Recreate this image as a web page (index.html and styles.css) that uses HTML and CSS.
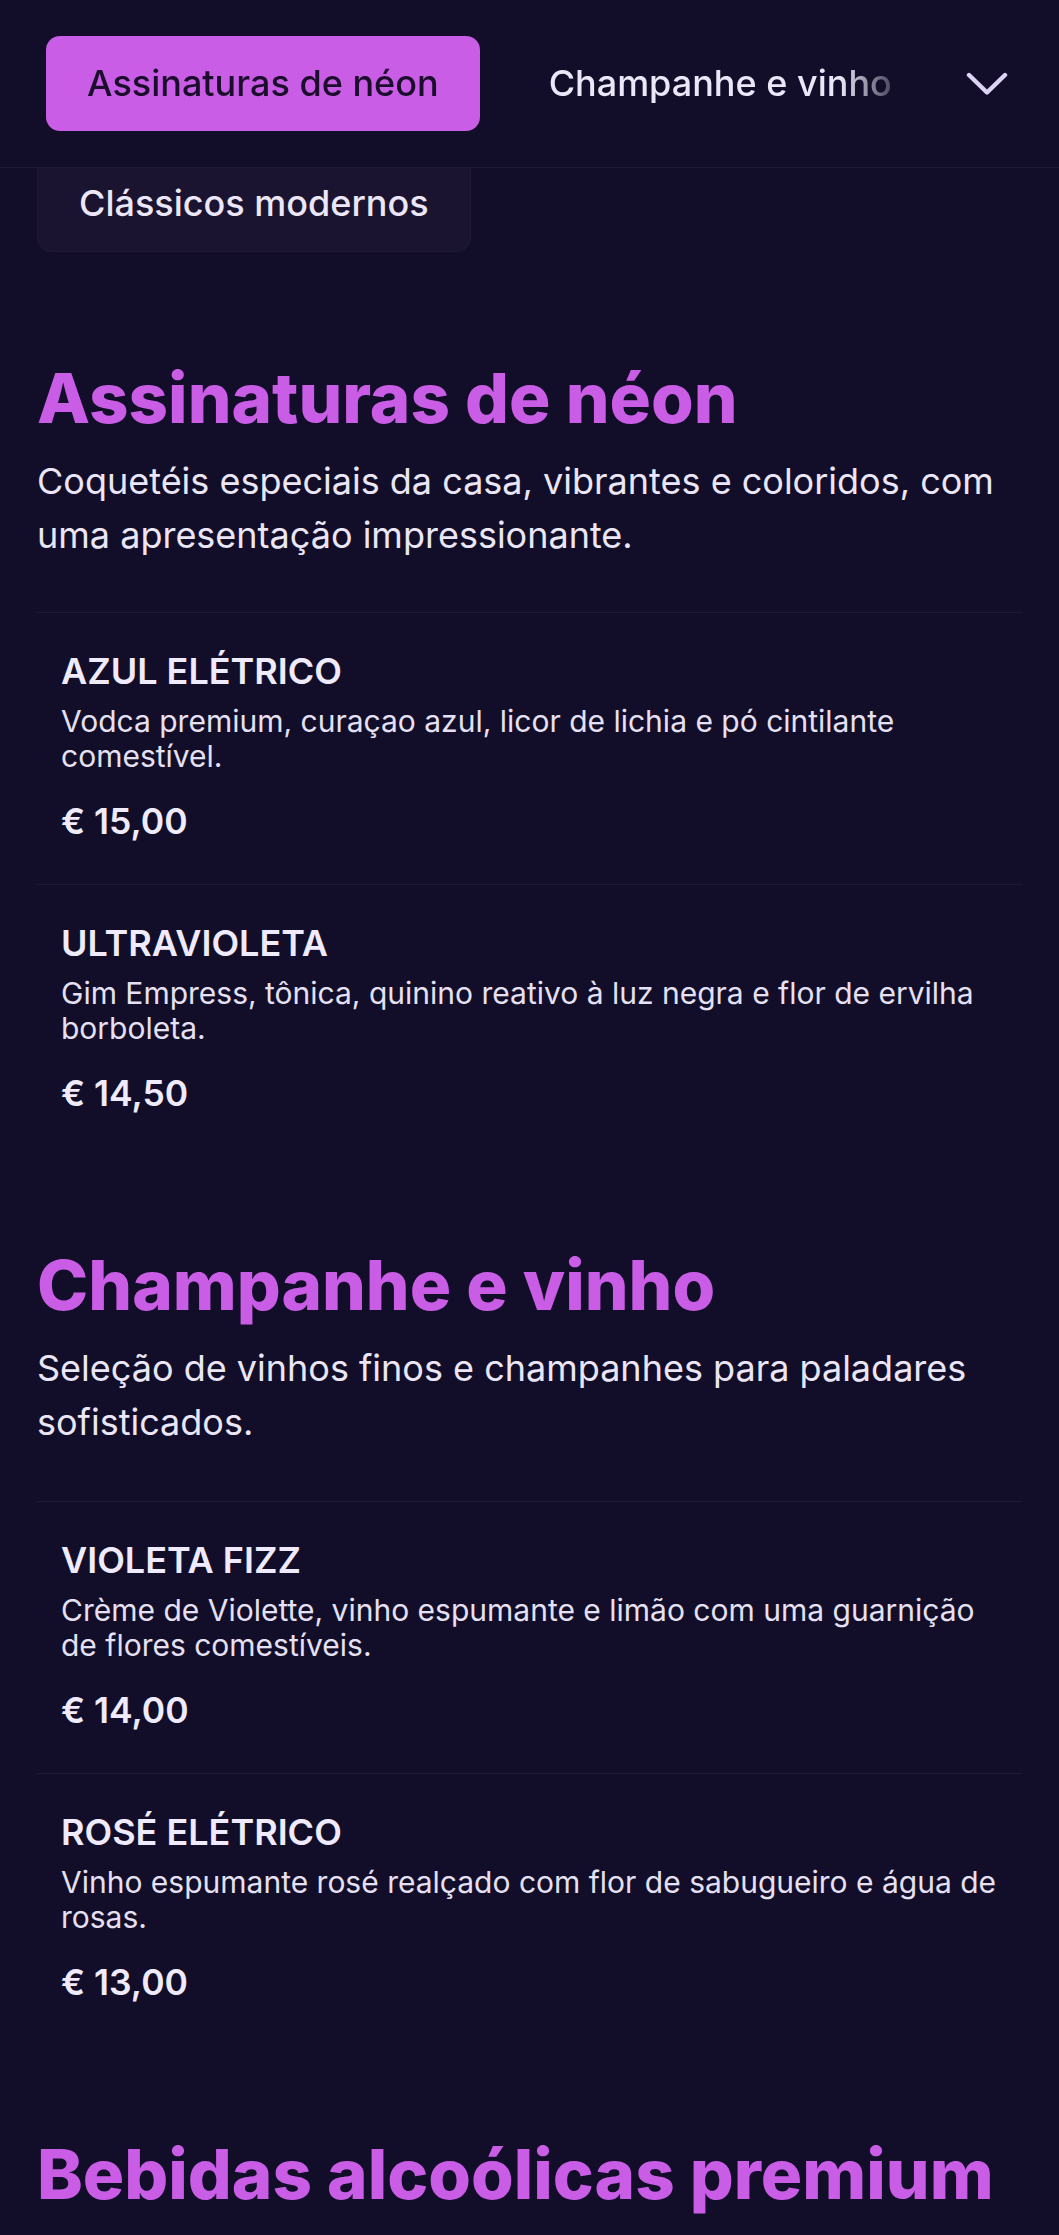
FILE: index.html
```html
<!DOCTYPE html>
<html lang="pt">
<head>
<meta charset="utf-8">
<title>Menu</title>
<link rel="stylesheet" href="styles.css">
</head>
<body>
<header class="topbar">
  <nav class="tabs">
    <div class="tab-track">
      <a class="tab tab-active" href="#neon">Assinaturas de néon</a>
      <a class="tab" href="#vinho">Champanhe e vinho</a>
      <a class="tab" href="#premium">Bebidas alcoólicas premium</a>
    </div>
  </nav>
  <button class="toggle" aria-label="Mostrar categorias">
    <svg width="42" height="24" viewBox="0 0 42 24"><polyline points="3,3 21,20.5 39,3" fill="none" stroke="currentColor" stroke-width="4.4" stroke-linecap="round" stroke-linejoin="round"/></svg>
  </button>
</header>
<main class="menu">
  <a class="chip" href="#classicos">Clássicos modernos</a>

  <section class="category" id="neon">
    <h2 class="cat-title">Assinaturas de néon</h2>
    <p class="cat-desc">Coquetéis especiais da casa, vibrantes e coloridos, com uma apresentação impressionante.</p>
    <ul class="items">
      <li class="item">
        <h3 class="item-name">AZUL ELÉTRICO</h3>
        <p class="item-desc">Vodca premium, curaçao azul, licor de lichia e pó cintilante comestível.</p>
        <p class="item-price">€ 15,00</p>
      </li>
      <li class="item">
        <h3 class="item-name">ULTRAVIOLETA</h3>
        <p class="item-desc">Gim Empress, tônica, quinino reativo à luz negra e flor de ervilha borboleta.</p>
        <p class="item-price">€ 14,50</p>
      </li>
    </ul>
  </section>

  <section class="category" id="vinho">
    <h2 class="cat-title">Champanhe e vinho</h2>
    <p class="cat-desc">Seleção de vinhos finos e champanhes para paladares sofisticados.</p>
    <ul class="items">
      <li class="item">
        <h3 class="item-name">VIOLETA FIZZ</h3>
        <p class="item-desc">Crème de Violette, vinho espumante e limão com uma guarnição de flores comestíveis.</p>
        <p class="item-price">€ 14,00</p>
      </li>
      <li class="item">
        <h3 class="item-name">ROSÉ ELÉTRICO</h3>
        <p class="item-desc">Vinho espumante rosé realçado com flor de sabugueiro e água de rosas.</p>
        <p class="item-price">€ 13,00</p>
      </li>
    </ul>
  </section>

  <section class="category" id="premium">
    <h2 class="cat-title">Bebidas alcoólicas premium</h2>
  </section>
</main>
</body>
</html>
```

FILE: styles.css
```css
* { box-sizing: border-box; }
html, body { margin: 0; padding: 0; }
body {
  background: #120e29;
  color: #ece7f8;
  font-family: "Inter", "Noto Sans", sans-serif;
  overflow: hidden;
}
.topbar {
  position: relative;
  z-index: 2;
  display: flex;
  align-items: center;
  gap: 44px;
  height: 168px;
  padding: 0 39px 0 46px;
  background: #120e29;
  border-bottom: 1px solid #1e1935;
}
.tabs {
  flex: 1;
  min-width: 0;
  overflow: hidden;
  -webkit-mask-image: linear-gradient(to right, #000 calc(100% - 70px), transparent);
  mask-image: linear-gradient(to right, #000 calc(100% - 70px), transparent);
}
.tab-track {
  display: flex;
  gap: 28px;
  white-space: nowrap;
}
.tab {
  display: block;
  padding: 20px 41px;
  font-size: 36px;
  line-height: 55px;
  font-weight: 500;
  color: #ece7f8;
  text-decoration: none;
  border-radius: 14px;
}
.tab-active {
  background: #c95de6;
  color: #1b0d2c;
}
.toggle {
  width: 66px;
  height: 66px;
  display: flex;
  align-items: center;
  justify-content: center;
  padding: 0;
  border: 0;
  background: transparent;
  color: #ddd3f5;
}
.menu {
  padding: 0 37px;
}
.chip {
  display: block;
  width: fit-content;
  margin-top: -12px;
  padding: 19px 41px 20px;
  font-size: 36px;
  line-height: 55px;
  font-weight: 500;
  color: #ece7f8;
  text-decoration: none;
  background: #1b1430;
  border: 1px solid #1f1836;
  border-radius: 14px;
}
.category {
  padding-top: 88px;
}
.category:first-of-type {
  padding-top: 105px;
}
.cat-title {
  margin: 0;
  font-size: 69px;
  line-height: 1.2;
  font-weight: 800;
  color: #c95de6;
}
.cat-desc {
  margin: 14px 0 0;
  font-size: 36px;
  line-height: 54px;
  color: #ebe6f6;
}
.items {
  list-style: none;
  margin: 50px 0 0;
  padding: 0;
}
.category + .category .items {
  margin-top: 52px;
}
.item {
  border-top: 1px solid #1f1a36;
  padding: 36px 24px 40px;
}
.item-name {
  margin: 0;
  font-size: 36px;
  line-height: 45px;
  font-weight: 600;
  color: #efeafc;
}
.item-desc {
  margin: 10px 0 0;
  font-size: 30px;
  line-height: 35.5px;
  color: #e6e0f3;
}
.item-price {
  margin: 25px 0 0;
  font-size: 35.5px;
  line-height: 44px;
  font-weight: 600;
  color: #efeafc;
}
```
